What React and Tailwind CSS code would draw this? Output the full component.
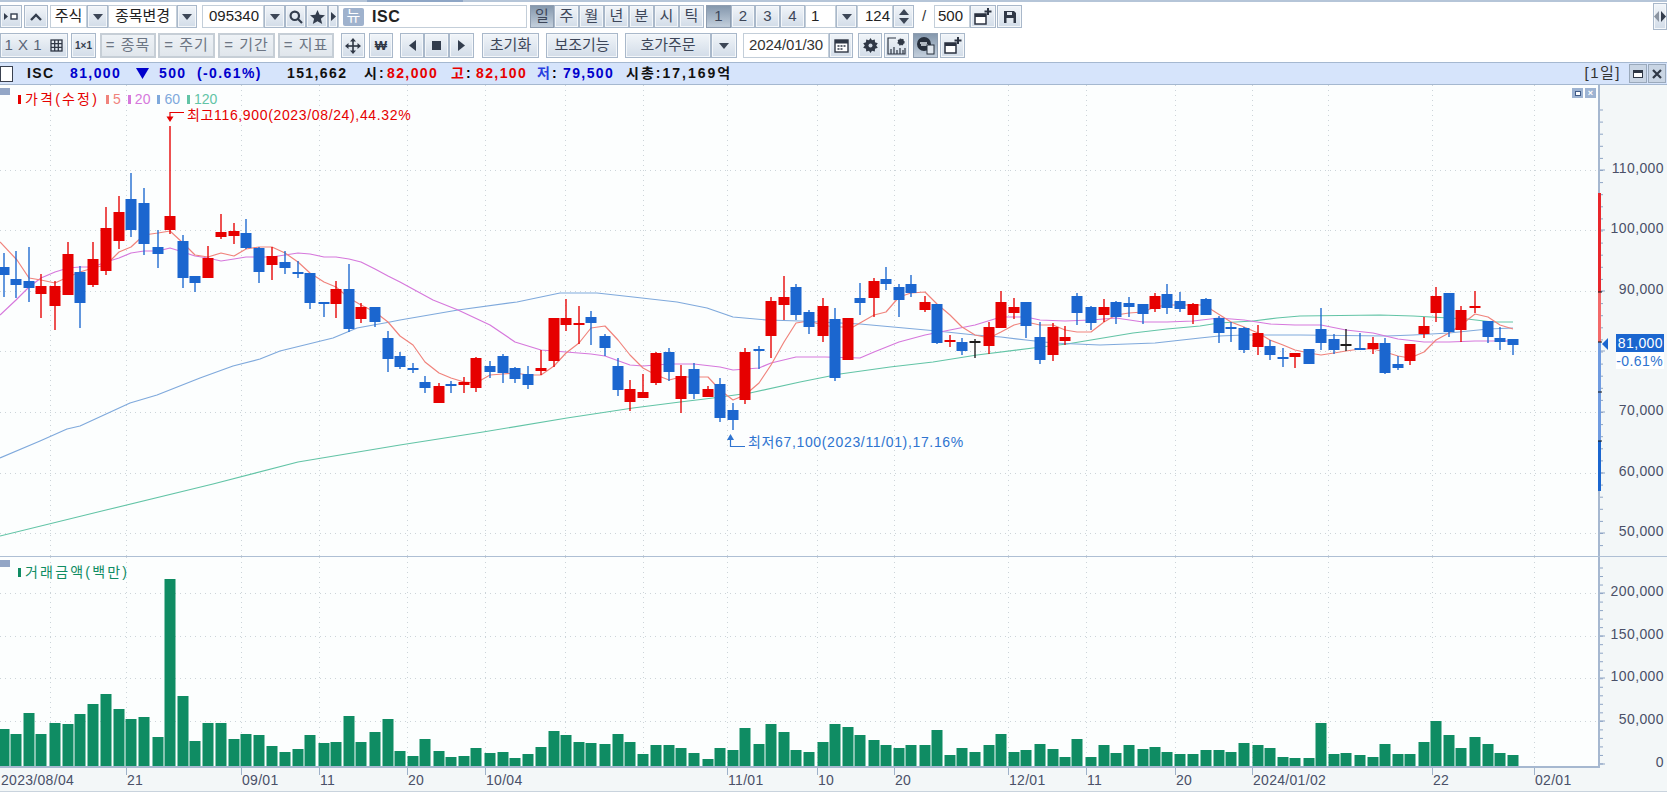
import { twMerge } from "tailwind-merge";

// x, wick top, wick bottom, body top, body bottom, colour (r/b/k) in page pixels
const candles = [
  [4, 253, 297, 267, 275, "b"], [16, 251, 298, 279, 285, "b"], [29, 247, 302, 281, 288, "b"], [41, 274, 318, 286, 294, "r"],
  [55, 281, 330, 286, 306, "r"], [68, 242, 295, 254, 295, "r"], [80, 266, 328, 272, 303, "b"], [93, 242, 287, 259, 285, "r"],
  [106, 207, 275, 228, 271, "r"], [119, 196, 249, 212, 241, "r"], [131, 173, 237, 199, 230, "b"], [144, 188, 255, 203, 244, "b"],
  [158, 230, 268, 247, 254, "b"], [170, 126, 234, 216, 230, "r"], [183, 235, 288, 241, 278, "b"], [195, 276, 292, 276, 283, "b"],
  [208, 246, 278, 258, 278, "r"], [221, 214, 239, 232, 237, "r"], [234, 223, 244, 231, 236, "r"], [246, 219, 249, 233, 248, "b"],
  [259, 247, 283, 248, 272, "b"], [272, 247, 280, 256, 265, "r"], [285, 251, 274, 262, 268, "b"], [298, 261, 278, 272, 274, "b"],
  [310, 273, 309, 273, 303, "b"], [324, 302, 317, 302, 304, "b"], [336, 281, 318, 289, 304, "r"], [349, 264, 332, 289, 329, "b"],
  [361, 303, 323, 307, 319, "r"], [375, 307, 327, 307, 322, "b"], [388, 331, 372, 338, 359, "b"], [400, 352, 369, 356, 367, "b"],
  [413, 363, 373, 368, 370, "b"], [425, 376, 393, 382, 388, "b"], [439, 383, 403, 386, 403, "r"], [451, 381, 393, 384, 386, "b"],
  [464, 377, 393, 382, 385, "r"], [476, 357, 392, 358, 388, "r"], [490, 361, 378, 366, 372, "b"], [503, 354, 383, 356, 373, "b"],
  [515, 367, 383, 368, 379, "b"], [528, 366, 389, 374, 385, "b"], [541, 350, 375, 368, 371, "r"], [554, 318, 367, 318, 361, "r"],
  [566, 299, 331, 318, 325, "r"], [579, 306, 344, 323, 325, "r"], [591, 311, 345, 317, 323, "b"], [605, 334, 356, 336, 348, "b"],
  [618, 358, 396, 366, 390, "b"], [630, 380, 411, 389, 402, "r"], [643, 374, 398, 392, 398, "r"], [656, 352, 385, 353, 383, "r"],
  [669, 348, 381, 352, 372, "b"], [681, 365, 413, 376, 399, "r"], [694, 363, 399, 369, 394, "b"], [708, 386, 397, 389, 397, "r"],
  [720, 378, 422, 384, 418, "b"], [733, 403, 430, 410, 420, "b"], [745, 348, 404, 352, 400, "r"], [759, 346, 369, 349, 351, "b"],
  [771, 297, 358, 301, 336, "r"], [784, 276, 320, 297, 305, "r"], [796, 284, 320, 287, 315, "b"], [809, 310, 334, 312, 327, "b"],
  [823, 298, 342, 306, 336, "r"], [835, 308, 381, 319, 378, "b"], [848, 318, 360, 318, 360, "r"], [860, 283, 315, 298, 303, "b"],
  [874, 278, 317, 281, 298, "r"], [886, 267, 290, 279, 284, "b"], [899, 284, 317, 287, 300, "b"], [911, 275, 297, 284, 293, "b"],
  [925, 296, 312, 302, 310, "r"], [937, 304, 344, 304, 343, "b"], [950, 335, 347, 340, 342, "r"], [962, 338, 355, 342, 351, "b"],
  [975, 339, 358, 341, 342, "k"], [989, 322, 354, 327, 346, "r"], [1001, 291, 328, 302, 328, "r"], [1014, 298, 319, 307, 313, "r"],
  [1026, 302, 338, 302, 326, "b"], [1040, 322, 364, 337, 360, "b"], [1053, 323, 361, 327, 355, "r"], [1065, 326, 345, 337, 341, "r"],
  [1077, 293, 325, 296, 313, "b"], [1091, 306, 330, 307, 323, "b"], [1104, 299, 322, 307, 315, "r"], [1116, 301, 324, 302, 317, "b"],
  [1129, 297, 317, 303, 307, "b"], [1143, 304, 324, 304, 314, "b"], [1155, 293, 312, 296, 309, "r"], [1167, 284, 314, 294, 308, "b"],
  [1180, 292, 312, 301, 309, "b"], [1193, 303, 324, 304, 315, "r"], [1206, 298, 315, 299, 315, "b"], [1219, 316, 343, 318, 333, "b"],
  [1231, 322, 342, 327, 329, "b"], [1244, 327, 353, 328, 350, "b"], [1258, 325, 355, 333, 347, "r"], [1270, 340, 360, 346, 355, "b"],
  [1283, 348, 367, 357, 359, "b"], [1295, 353, 368, 353, 357, "r"], [1309, 349, 364, 349, 364, "b"], [1321, 308, 350, 329, 343, "b"],
  [1334, 334, 354, 339, 350, "b"], [1346, 329, 351, 344, 345, "k"], [1360, 333, 350, 348, 350, "b"], [1373, 337, 354, 343, 349, "r"],
  [1385, 338, 374, 343, 373, "b"], [1398, 356, 370, 364, 368, "b"], [1410, 344, 365, 344, 361, "r"], [1424, 317, 338, 326, 334, "r"],
  [1436, 287, 322, 296, 313, "r"], [1449, 293, 337, 293, 332, "b"], [1461, 306, 342, 310, 330, "r"], [1475, 291, 313, 306, 308, "r"],
  [1488, 321, 343, 321, 337, "b"], [1500, 327, 350, 338, 342, "b"], [1513, 339, 355, 339, 345, "b"],
];

const volumes = [
  37, 32, 53, 32, 43, 42, 52, 62, 72, 57, 47, 49, 29, 187, 70, 25, 43, 43, 27, 32, 31, 20, 14, 17, 31, 23, 24, 50, 24, 34,
  47, 15, 10, 27, 15, 9, 10, 18, 13, 14, 8, 12, 19, 35, 31, 24, 23, 22, 32, 24, 12, 21, 21, 18, 13, 7, 18, 16, 38, 22, 42,
  34, 16, 14, 24, 42, 39, 31, 26, 21, 18, 21, 21, 36, 11, 18, 14, 21, 32, 14, 16, 22, 17, 9, 27, 9, 21, 13, 21, 17, 19, 14,
  12, 12, 16, 16, 14, 23, 21, 18, 9, 8, 8, 43, 12, 13, 11, 9, 22, 12, 12, 24, 45, 31, 18, 29, 22, 13, 11,
];

const ma5 =
  "0,242 17,260 29,278 41,280 55,283 68,277 80,272 93,268 106,265 113,258 119,252 131,247 144,235 158,233 170,231 183,243 195,255 208,257 221,253 234,256 246,249 259,247 272,247 285,253 298,262 310,273 324,282 336,287 349,298 361,305 375,312 388,322 400,336 413,345 425,362 439,373 451,378 464,382 476,383 490,375 503,374 515,373 528,375 541,375 554,366 566,353 579,343 591,328 605,326 618,340 630,355 643,368 656,375 669,380 681,377 694,377 708,377 720,390 733,400 745,395 759,383 771,365 784,342 796,323 809,321 822,325 835,327 853,327 874,315 886,312 899,297 911,293 925,292 937,304 950,315 962,327 975,335 989,338 1001,332 1014,325 1026,322 1040,325 1053,325 1065,330 1077,332 1091,332 1104,322 1116,315 1129,313 1143,312 1155,307 1167,305 1180,305 1193,305 1206,305 1212,310 1231,322 1244,327 1258,333 1270,340 1283,345 1295,350 1309,353 1321,355 1334,353 1346,351 1360,349 1373,349 1385,352 1398,356 1410,358 1424,352 1436,340 1449,333 1461,325 1475,314 1488,317 1500,325 1513,329";
const ma20 =
  "0,315 16,300 29,287 41,278 55,272 68,268 80,267 93,267 106,262 119,258 131,253 144,251 158,251 170,248 183,252 195,256 208,258 221,261 234,259 246,257 272,257 285,255 298,253 310,254 324,257 336,257 349,259 361,262 375,269 388,276 400,282 433,300 458,310 490,325 515,342 541,350 566,352 591,354 605,356 630,365 643,366 669,364 694,364 720,367 733,370 759,368 771,363 796,357 825,357 860,358 874,352 899,342 925,335 950,330 975,325 1001,317 1026,317 1040,320 1065,321 1091,320 1116,318 1143,322 1167,322 1193,321 1219,318 1244,320 1270,324 1295,325 1321,325 1346,330 1373,333 1398,339 1424,342 1449,342 1475,341 1500,341 1513,341";
const ma60 =
  "0,458 40,441 67,429 80,426 130,403 157,395 200,378 233,366 260,359 280,351 333,338 357,328 390,322 400,320 458,310 517,302 560,293 597,293 633,297 677,302 707,308 733,317 767,320 800,321 860,324 893,327 937,331 975,335 1001,337 1026,340 1053,343 1100,345 1155,343 1200,338 1219,336 1244,335 1300,335 1387,336 1413,335 1449,333 1488,329 1513,328";
const ma120 =
  "0,536 106,510 213,484 298,462 400,445 483,432 567,418 633,408 680,402 713,398 750,393 800,382 840,374 890,367 933,362 977,355 1033,348 1067,344 1133,333 1167,329 1200,326 1219,323 1253,321 1277,318 1300,316 1380,315 1413,316 1467,319 1493,322 1513,322";

const gridX = [50, 126, 241, 319, 407, 485, 565, 643, 727, 817, 894, 1008, 1086, 1175, 1252, 1328, 1432, 1534];
// the 80,000 label is hidden by the current price chip, only its grid line shows
const priceY = [
  [170, "110,000"], [230, "100,000"], [291, "90,000"], [351, ""], [412, "70,000"], [473, "60,000"], [533, "50,000"],
];
const volumeY = [
  [593, "200,000"], [636, "150,000"], [678, "100,000"], [721, "50,000"], [764, "0"],
];
const dates = [
  [0, "2023/08/04"], [126, "21"], [241, "09/01"], [319, "11"], [407, "20"], [485, "10/04"], [727, "11/01"], [817, "10"],
  [894, "20"], [1008, "12/01"], [1086, "11"], [1175, "20"], [1252, "2024/01/02"], [1432, "22"], [1534, "02/01"],
];

const colors = { r: "#e60000", b: "#1b66cf", k: "#1c1c1c" };

function Btn({ className, active, off, children }) {
  return (
    <div
      className={twMerge(
        "flex h-full shrink-0 items-center justify-center border text-[15px] whitespace-nowrap text-[#3d4659]",
        "border-[#a9b8ca] bg-linear-to-b from-[#f1f5f9] to-[#d2dce8] shadow-[inset_0_0_0_1px_#f4f7fa]",
        active && "border-[#8e9db0] from-[#8598ad] to-[#c3cfdc] shadow-none",
        off && "border-2 border-[#c6ced6] from-[#eef2f6] to-[#e0e6ec] tracking-[1px] text-[#6d7684] shadow-none",
        className,
      )}
    >
      {children}
    </div>
  );
}

function Field({ className, children }) {
  return (
    <div className={twMerge("flex h-full shrink-0 items-center border border-[#c3ced9] bg-white text-[15px] text-[#222]", className)}>
      {children}
    </div>
  );
}

function Caret({ up, size = 10, className = "fill-[#3c4656]" }) {
  return (
    <svg width={size} height={size * 0.6} viewBox="0 0 10 6" className={className}>
      <path d={up ? "M5 0 L10 6 L0 6 Z" : "M0 0 L10 0 L5 6 Z"} />
    </svg>
  );
}

function Side({ left }) {
  return (
    <svg width="7" height="11" viewBox="0 0 7 11" className="fill-[#333d4d]">
      <path d={left ? "M7 0 V11 L0 5.5 Z" : "M0 0 V11 L7 5.5 Z"} />
    </svg>
  );
}

function PlusWindow() {
  return (
    <svg width="18" height="17" viewBox="0 0 18 17">
      <rect x="1" y="6" width="11" height="10" fill="#fff" stroke="#2b3240" strokeWidth="1.5" />
      <rect x="1" y="6" width="11" height="3" fill="#2b3240" />
      <path d="M14 0 V7 M10.5 3.5 H17.5" stroke="#2b3240" strokeWidth="2" />
    </svg>
  );
}

function Toolbar() {
  return (
    <>
      <div className="flex h-[2px] bg-[#b5c5d8]">
        <span className="ml-[367px] w-[96px] bg-[#8ea6c6]" />
      </div>
      <div className="mt-[3px] flex h-[23px]">
        <Btn className="w-[22px] gap-[2px]">
          <svg width="14" height="9" viewBox="0 0 14 9">
            <path d="M0 1 L4 4.5 L0 8 Z" fill="#333d4d" />
            <rect x="7" y="2" width="6" height="5" fill="#fff" stroke="#333d4d" strokeWidth="1.4" />
          </svg>
        </Btn>
        <Btn className="ml-[2px] w-[24px]">
          <svg width="12" height="8" viewBox="0 0 12 8">
            <path d="M1 7 L6 2 L11 7" fill="none" stroke="#333d4d" strokeWidth="2.4" />
          </svg>
        </Btn>
        <Field className="ml-[2px] w-[37px] justify-center">주식</Field>
        <Btn className="w-[21px]"><Caret /></Btn>
        <Field className="w-[69px] justify-center">종목변경</Field>
        <Btn className="w-[20px]"><Caret /></Btn>
        <Field className="ml-[5px] w-[62px] pl-[6px]">095340</Field>
        <Btn className="w-[21px]"><Caret /></Btn>
        <Btn className="w-[21px]">
          <svg width="14" height="14" viewBox="0 0 14 14" fill="none" stroke="#333d4d" strokeWidth="2.2">
            <circle cx="5.8" cy="5.8" r="4.2" />
            <path d="M9 9 L13 13" />
          </svg>
        </Btn>
        <Btn className="w-[22px]">
          <svg width="15" height="14" viewBox="0 0 15 14" className="fill-[#333d4d]">
            <path d="M7.5 0 L9.6 4.8 L15 5.3 L10.9 8.7 L12.2 14 L7.5 11.2 L2.8 14 L4.1 8.7 L0 5.3 L5.4 4.8 Z" />
          </svg>
        </Btn>
        <Btn className="w-[10px]"><svg width="5" height="9" viewBox="0 0 5 9" className="fill-[#333d4d]"><path d="M0 0 L5 4.5 L0 9 Z" /></svg></Btn>
        <Field className="w-[189px] pl-[4px]">
          <span className="flex h-[18px] w-[21px] items-center justify-center rounded-[2px] bg-[#9fb2cd] text-[15px] text-white">뉴</span>
          <span className="ml-[8px] text-[16px] font-bold tracking-[0.6px]">ISC</span>
        </Field>
        <Btn active className="ml-[3px] w-[24px]">일</Btn>
        <Btn className="w-[25px]">주</Btn>
        <Btn className="w-[25px]">월</Btn>
        <Btn className="w-[25px]">년</Btn>
        <Btn className="w-[25px]">분</Btn>
        <Btn className="w-[25px]">시</Btn>
        <Btn className="w-[25px]">틱</Btn>
        <Btn active className="ml-[2px] w-[25px]">1</Btn>
        <Btn className="w-[24px]">2</Btn>
        <Btn className="w-[25px]">3</Btn>
        <Btn className="w-[25px]">4</Btn>
        <Field className="w-[31px] pl-[5px]">1</Field>
        <Btn className="w-[21px]"><Caret /></Btn>
        <Field className="w-[36px] justify-end pr-[2px]">124</Field>
        <Btn className="w-[21px] flex-col gap-[3px]">
          <Caret up />
          <Caret />
        </Btn>
        <div className="flex w-[20px] shrink-0 items-center justify-center text-[15px] text-[#333]">/</div>
        <Field className="w-[36px] pl-[3px]">500</Field>
        <Btn className="w-[26px]"><PlusWindow /></Btn>
        <Btn className="ml-[1px] w-[25px]">
          <svg width="14" height="14" viewBox="0 0 14 14">
            <path d="M1 1 H11 L13 3 V13 H1 Z" fill="#2f3745" />
            <rect x="4" y="2" width="5" height="3" fill="#dfe6ee" />
            <rect x="3.5" y="8" width="7" height="5" fill="#dfe6ee" />
          </svg>
        </Btn>
        <Btn className="-mt-[2px] ml-auto h-[27px] w-[14px] gap-[1px]">
          <svg width="12" height="11" viewBox="0 0 12 11">
            <path d="M5 0 V11 L0 5.5 Z" fill="#8b94a1" />
            <path d="M7 0 V11 L12 5.5 Z" fill="#333d4d" />
          </svg>
        </Btn>
      </div>

      <div className="mt-[5px] flex h-[25px]">
        <Btn className="w-[68px] justify-end gap-[8px] pr-[4px] text-[15px] tracking-[0.5px] text-[#5b6577]">
          1 X 1
          <svg width="13" height="13" viewBox="0 0 13 13" fill="none" stroke="#2f3745" strokeWidth="1.3">
            <rect x="1" y="1" width="11" height="11" />
            <path d="M1 4.7 H12 M1 8.3 H12 M4.7 1 V12 M8.3 1 V12" />
          </svg>
        </Btn>
        <Btn className="ml-[3px] w-[25px] text-[10px] font-bold text-[#333d4d]">1×1</Btn>
        <Btn off className="ml-[4px] w-[56px]">= 종목</Btn>
        <Btn off className="ml-[2px] w-[57px]">= 주기</Btn>
        <Btn off className="ml-[3px] w-[57px]">= 기간</Btn>
        <Btn off className="ml-[3px] w-[56px]">= 지표</Btn>
        <Btn className="ml-[7px] w-[24px]">
          <svg width="16" height="16" viewBox="0 0 16 16" className="fill-[#2f3745]">
            <path d="M8 0 L11 3.5 H5 Z M8 16 L5 12.5 H11 Z M0 8 L3.5 5 V11 Z M16 8 L12.5 11 V5 Z" />
            <rect x="7.2" y="3" width="1.6" height="10" />
            <rect x="3" y="7.2" width="10" height="1.6" />
          </svg>
        </Btn>
        <Btn className="ml-[4px] w-[24px] text-[13px] font-bold text-[#2f3745]">₩</Btn>
        <Btn className="ml-[7px] w-[24px]"><Side left /></Btn>
        <Btn className="w-[25px]"><span className="h-[9px] w-[9px] bg-[#333d4d]" /></Btn>
        <Btn className="w-[25px]"><Side /></Btn>
        <Btn className="ml-[8px] w-[57px]">초기화</Btn>
        <Btn className="ml-[7px] w-[72px]">보조기능</Btn>
        <Btn className="ml-[7px] w-[86px]">호가주문</Btn>
        <Btn className="w-[26px]"><Caret /></Btn>
        <Field className="ml-[6px] w-[86px] justify-center tracking-[-0.1px] text-[#333]">2024/01/30</Field>
        <Btn className="w-[24px]">
          <svg width="15" height="15" viewBox="0 0 15 15">
            <rect x="1" y="2" width="13" height="12" fill="#fff" stroke="#2f3745" strokeWidth="1.4" />
            <rect x="1" y="2" width="13" height="3.5" fill="#2f3745" />
            <path d="M3.5 8 H5.5 M6.5 8 H8.5 M9.5 8 H11.5 M3.5 11 H5.5 M6.5 11 H8.5" stroke="#2f3745" strokeWidth="1.6" />
          </svg>
        </Btn>
        <Btn className="ml-[5px] w-[24px]">
          <svg width="15" height="15" viewBox="0 0 15 15">
            <path d="M7.5 0 L9 2.3 L11.8 1.4 L12 4.3 L14.8 5.2 L13.2 7.5 L14.8 9.8 L12 10.7 L11.8 13.6 L9 12.7 L7.5 15 L6 12.7 L3.2 13.6 L3 10.7 L0.2 9.8 L1.8 7.5 L0.2 5.2 L3 4.3 L3.2 1.4 L6 2.3 Z" fill="#2f3745" />
            <circle cx="7.5" cy="7.5" r="2" fill="#cfd8e3" />
          </svg>
        </Btn>
        <Btn className="ml-[2px] w-[25px]">
          <svg width="19" height="18" viewBox="0 0 19 18" fill="none" stroke="#2f3745" strokeWidth="1.2">
            <path d="M9 1 H1 V17 H18 V11" />
            <path d="M4 17 V12 M7 17 V10 M10 17 V13 M13 17 V11 M16 17 V13" />
            <circle cx="14" cy="5" r="3" fill="#2f3745" strokeDasharray="1.5 1" />
          </svg>
        </Btn>
        <Btn active className="ml-[4px] w-[25px]">
          <svg width="18" height="18" viewBox="0 0 18 18">
            <circle cx="7" cy="7" r="7" fill="#27303d" />
            <path d="M3 6 H10 M11 8 H4" stroke="#dfe6ee" strokeWidth="1.4" />
            <rect x="10" y="8" width="7" height="9" fill="#dfe6ee" stroke="#27303d" />
          </svg>
        </Btn>
        <Btn className="ml-[2px] w-[25px]"><PlusWindow /></Btn>
      </div>
    </>
  );
}

function InfoBar() {
  return (
    <div className="mt-[4px] flex h-[23px] items-center border-y border-[#a5b8d0] bg-[#d6e4fb] text-[14px] font-bold tracking-[1.4px] whitespace-nowrap">
      <span className="h-[16px] w-[13px] border border-[#3a4150] bg-white" />
      <span className="ml-[14px] w-[43px] text-[#111]">ISC</span>
      <span className="w-[66px] text-[#0000cc]">81,000</span>
      <span className="flex w-[23px]">
        <svg width="13" height="11" viewBox="0 0 13 11" className="fill-[#0000cc]"><path d="M0 0 H13 L6.5 11 Z" /></svg>
      </span>
      <span className="w-[38px] text-[#0000cc]">500</span>
      <span className="w-[90px] text-[#0000cc]">(-0.61%)</span>
      <span className="w-[77px] text-[#111]">151,662</span>
      <span className="w-[23px] tracking-[2px] text-[#111]">시:</span>
      <span className="w-[64px] text-[#e60000]">82,000</span>
      <span className="w-[25px] tracking-[2px]"><span className="text-[#e60000]">고</span>:</span>
      <span className="w-[61px] text-[#e60000]">82,100</span>
      <span className="w-[26px] tracking-[2px]"><span className="text-[#2a3fe0]">저</span>:</span>
      <span className="w-[63px] text-[#0000cc]">79,500</span>
      <span className="tracking-[2px] text-[#111]">시총:17,169억</span>
      <span className="ml-auto text-[15px] font-normal tracking-[1.5px] text-[#333]">[1일]</span>
      <div className="mr-[1px] ml-[8px] flex h-[19px] gap-[1px]">
        <div className="flex w-[18px] items-center justify-center border border-[#9aa9bb] bg-[#c9d5e4]">
          <span className="h-[8px] w-[10px] border border-t-[3px] border-[#2f3745] bg-white" />
        </div>
        <div className="flex w-[18px] items-center justify-center border border-[#9aa9bb] bg-[#c9d5e4]">
          <svg width="10" height="10" viewBox="0 0 10 10" stroke="#2f3745" strokeWidth="2.2"><path d="M1 1 L9 9 M9 1 L1 9" /></svg>
        </div>
      </div>
    </div>
  );
}

function Grid({ lines, y1, y2 }) {
  return (
    <g stroke="#ccd4d9" strokeDasharray="1 4">
      {gridX.map((x) => <line key={x} x1={x + 0.5} x2={x + 0.5} y1={y1} y2={y2} />)}
      {lines.map(([y]) => <line key={y} x1="0" x2="1598" y1={y + 0.5} y2={y + 0.5} />)}
    </g>
  );
}

function PriceChart() {
  return (
    <svg width="1598" height="471" viewBox="0 85 1598 471" className="block">
      <Grid lines={priceY} y1={85} y2={556} />
      <g fill="none" strokeWidth="1.2" strokeLinejoin="round">
        <polyline points={ma120} stroke="#62c4a6" />
        <polyline points={ma60} stroke="#7fa9dc" />
        <polyline points={ma20} stroke="#d678dc" />
        <polyline points={ma5} stroke="#f0837c" />
      </g>
      {candles.map(([x, wt, wb, bt, bb, c]) => (
        <g key={x} fill={colors[c]}>
          <rect x={x - 0.8} y={wt} width="1.6" height={wb - wt} opacity="0.85" />
          <rect x={x - 5.5} y={bt} width="11" height={Math.max(bb - bt, 2)} />
        </g>
      ))}
      <path d="M184 112.5 H170 V118" stroke="#e60000" fill="none" strokeWidth="1.2" />
      <path d="M170 122 L166.5 116.5 H173.5 Z" fill="#e60000" />
      <path d="M730.5 438 V446.5 H745" stroke="#2f74d0" fill="none" strokeWidth="1.2" />
      <path d="M730.5 434 L727 440 H734 Z" fill="#2f74d0" />
      <text x="187" y="120" fontSize="14" fill="#e60000" letterSpacing="0.65">최고116,900(2023/08/24),44.32%</text>
      <text x="748" y="447" fontSize="14" fill="#2f74d0" letterSpacing="0.65">최저67,100(2023/11/01),17.16%</text>
    </svg>
  );
}

function VolumeChart() {
  return (
    <svg width="1598" height="209" viewBox="0 557 1598 209" className="block">
      <Grid lines={volumeY.slice(0, 4)} y1={557} y2={766} />
      {candles.map(([x], i) => (
        <rect key={x} x={x - 5.5} y={766 - volumes[i]} width="11" height={volumes[i]} fill="#0f8c63" />
      ))}
    </svg>
  );
}

function AxisTicks({ from, to, step, major }) {
  const ticks = [];
  for (let y = from; y <= to; y += step) ticks.push(y);
  return (
    <g stroke="#8fa5c5">
      {ticks.map((y) => <line key={y} x1="1600" x2="1603" y1={y} y2={y} />)}
      {major.map(([y]) => <line key={y} x1="1600" x2="1605" y1={y} y2={y} />)}
    </g>
  );
}

function PriceAxis() {
  return (
    <svg width="69" height="471" viewBox="1598 85 69 471" className="block">
      <AxisTicks from={110} to={556} step={12.1} major={priceY} />
      <rect x="1598" y="193" width="3" height="99" fill="#e8262b" />
      <rect x="1598" y="292" width="3" height="50" fill="#f26a6a" />
      <rect x="1598" y="342" width="3" height="99" fill="#6f9be0" />
      <rect x="1598" y="441" width="3" height="50" fill="#1b66cf" />
      {[292, 342, 392, 441].map((y) => <line key={y} x1="1598" x2="1602" y1={y} y2={y} stroke="#111" />)}
      {priceY.filter(([, label]) => label).map(([y, label]) => (
        <text key={y} x="1664" y={y + 3} fontSize="14" fill="#4a5068" textAnchor="end" letterSpacing="0.4">{label}</text>
      ))}
      <path d="M1602 344 L1608 338 V350 Z" fill="#1b66cf" />
      <rect x="1616" y="334" width="48" height="18" fill="#1b66cf" />
      <text x="1663" y="348" fontSize="14" fill="#fff" textAnchor="end" letterSpacing="0.4">81,000</text>
      <rect x="1616" y="352" width="48" height="17" fill="#fff" />
      <text x="1663" y="366" fontSize="14" fill="#2f74d0" textAnchor="end" letterSpacing="0.4">-0.61%</text>
    </svg>
  );
}

function VolumeAxis() {
  return (
    <svg width="69" height="209" viewBox="1598 557 69 209" className="block overflow-visible">
      <AxisTicks from={568} to={766} step={8.52} major={volumeY} />
      {volumeY.map(([y, label]) => (
        <text key={y} x="1664" y={y + 3} fontSize="14" fill="#4a5068" textAnchor="end" letterSpacing="0.4">{label}</text>
      ))}
    </svg>
  );
}

function Legend({ color, label, className }) {
  return (
    <span className={twMerge("flex items-center gap-[4px]", className)} style={{ color }}>
      <span className="h-[9px] w-[3px]" style={{ backgroundColor: color }} />
      {label}
    </span>
  );
}

export default function App() {
  return (
    <div className="h-[792px] w-[1667px] overflow-hidden bg-white [font-family:'Liberation_Sans','Noto_Sans_CJK_KR',sans-serif]">
      <Toolbar />
      <InfoBar />

      {/* price pane */}
      <div className="flex h-[471px]">
        <div className="relative w-[1598px] bg-[#fcfefe]">
          <PriceChart />
          <span className="absolute top-[3px] left-0 h-[7px] w-[10px] bg-[#93a6c6]" />
          <div className="absolute top-[4px] left-[18px] flex items-center gap-[7px] text-[14px]">
            <Legend color="#e60000" label="가격(수정)" className="tracking-[2.2px]" />
            <Legend color="#f0837c" label="5" />
            <Legend color="#d678dc" label="20" />
            <Legend color="#7fa9dc" label="60" />
            <Legend color="#62c4a6" label="120" />
          </div>
          <div className="absolute top-[3px] right-[2px] flex gap-[2px]">
            <span className="flex h-[10px] w-[11px] items-center justify-center bg-[#9db3d2]">
              <span className="h-[5px] w-[6px] border border-[#3f5a86] bg-white" />
            </span>
            <span className="flex h-[10px] w-[11px] items-center justify-center bg-[#9db3d2] text-[9px] leading-none font-bold text-white">×</span>
          </div>
        </div>
        <div className="w-[69px] border-l-2 border-[#a6b8d0] bg-[#f3f7f8]">
          <div className="-ml-[2px]"><PriceAxis /></div>
        </div>
      </div>

      <div className="h-[1px] bg-[#aebfd4]" />

      {/* volume pane */}
      <div className="flex h-[209px]">
        <div className="relative w-[1598px] bg-[#fcfefe]">
          <VolumeChart />
          <span className="absolute top-[3px] left-0 h-[7px] w-[10px] bg-[#93a6c6]" />
          <div className="absolute top-[5px] left-[18px] text-[14px] tracking-[2.2px]">
            <Legend color="#0f8c63" label="거래금액(백만)" />
          </div>
        </div>
        <div className="relative z-10 w-[69px] border-l-2 border-[#a6b8d0] bg-[#f3f7f8]">
          <div className="-ml-[2px]"><VolumeAxis /></div>
        </div>
      </div>

      {/* date axis */}
      <div className="h-[26px] border-b border-b-[#c9d3dd] bg-[#f3f7f8] text-[14px] text-[#4a5068]">
        <div className="relative h-full w-[1600px] border-t-2 border-t-[#a6b8d0]">
          {dates.map(([x, label]) => (
            <span key={x} className="absolute top-[4px] pl-[1px] leading-[16px] tracking-[0.3px]" style={{ left: x }}>
              {label}
            </span>
          ))}
          {gridX.filter((x) => dates.some((d) => d[0] === x)).map((x) => (
            <span key={x} className="absolute top-0 h-[7px] w-[1px] bg-[#9fb2c9]" style={{ left: x }} />
          ))}
        </div>
      </div>
    </div>
  );
}
